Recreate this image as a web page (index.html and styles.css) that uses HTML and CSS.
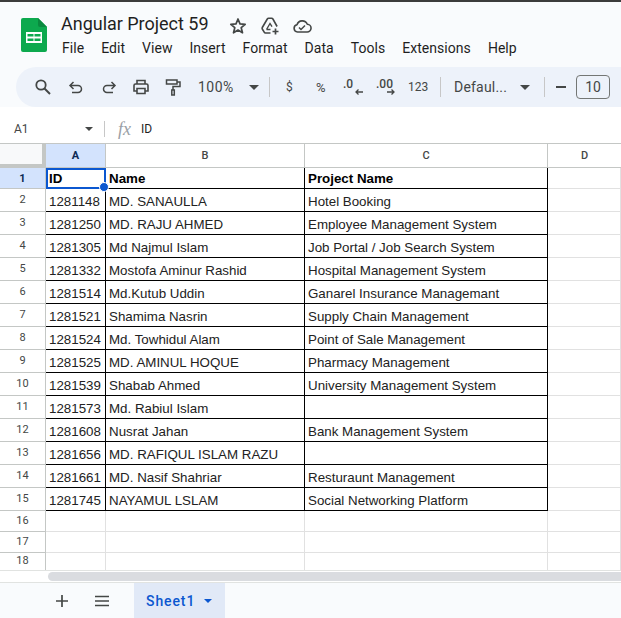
FILE: index.html
```html
<!DOCTYPE html>
<html lang="en">
<head>
<meta charset="utf-8">
<title>Angular Project 59</title>
<link rel="stylesheet" href="styles.css">
</head>
<body>
<div class="app">
  <header class="header">
    <svg class="logo" viewBox="0 0 26 34" width="26" height="34">
      <path d="M2 0h15l9 9v23a2 2 0 0 1-2 2H2a2 2 0 0 1-2-2V2a2 2 0 0 1 2-2z" fill="#0da94e"/>
      <path d="M17 0l9 9h-7a2 2 0 0 1-2-2z" fill="#0a8a3f"/>
      <path d="M5 14h16v11H5z" fill="#fff"/>
      <path d="M6.500 16h6v2.500h-6zM13.500 16h6v2.500h-6zM6.500 20.500h6V23h-6zM13.500 20.500h6V23h-6z" fill="#0da94e"/>
    </svg>
    <div class="titles">
      <div class="title-row">
        <span class="doc-title">Angular Project 59</span>
        <svg class="ti ti-star" viewBox="0 0 20 20" width="20" height="20"><path d="M10 3l2 4.900 5.200.4-4 3.400 1.300 5.100L10 14l-4.500 2.800 1.300-5.100-4-3.400 5.200-.4z" fill="none" stroke="#444746" stroke-width="1.700" stroke-linejoin="round"/></svg>
        <svg class="ti ti-drive" viewBox="0 0 20 20" width="20" height="20"><path d="M10.500 17H5.500a1.500 1.500 0 0 1-1.300-.8L2.300 13a1.500 1.500 0 0 1 0-1.500l5-8.500a1.500 1.500 0 0 1 1.300-.7h3a1.500 1.500 0 0 1 1.300.7l4.200 7.500" fill="none" stroke="#444746" stroke-width="1.600" stroke-linejoin="round"/><path d="M6.500 13.500L10 7.500l2 3.200M6.500 13.500h4" fill="none" stroke="#444746" stroke-width="1.400"/><path d="M15.500 12.500v6M12.500 15.500h6" stroke="#444746" stroke-width="1.700"/></svg>
        <svg class="ti ti-cloud" viewBox="0 0 20 20" width="20" height="20"><path d="M5.500 16a3.700 3.700 0 0 1-.5-7.300A5.500 5.500 0 0 1 15.300 8.200 3.900 3.900 0 0 1 15 16z" fill="none" stroke="#444746" stroke-width="1.600" stroke-linejoin="round"/><path d="M7 11.500l2 2 4-4" fill="none" stroke="#444746" stroke-width="1.500"/></svg>
      </div>
      <nav class="menu">
        <span>File</span><span>Edit</span><span>View</span><span>Insert</span><span>Format</span><span>Data</span><span>Tools</span><span>Extensions</span><span>Help</span>
      </nav>
    </div>
  </header>

  <div class="toolbar">
    <svg class="tb tb-search" viewBox="0 0 18 18" width="18" height="18"><circle cx="7" cy="7" r="4.700" fill="none" stroke="#444746" stroke-width="1.800"/><path d="M10.500 10.500l5.500 5.500" stroke="#444746" stroke-width="2"/></svg>
    <svg class="tb tb-undo" viewBox="0 0 18 18" width="18" height="18"><path d="M6.500 4L3 7.500 6.500 11M3.500 7.500H11a3.500 3.500 0 0 1 0 7H5" fill="none" stroke="#444746" stroke-width="1.500"/></svg>
    <svg class="tb tb-redo" viewBox="0 0 18 18" width="18" height="18"><path d="M11.500 4L15 7.500 11.500 11M14.500 7.500H7a3.500 3.500 0 0 0 0 7h6" fill="none" stroke="#444746" stroke-width="1.500"/></svg>
    <svg class="tb tb-print" viewBox="0 0 18 18" width="18" height="18"><path d="M5 6V2.500h8V6M5 13H2V7.500A1.500 1.500 0 0 1 3.500 6h11A1.500 1.500 0 0 1 16 7.500V13h-3M5 10.500h8v5H5z" fill="none" stroke="#444746" stroke-width="1.600"/></svg>
    <svg class="tb tb-paint" viewBox="0 0 18 18" width="18" height="18"><path d="M2.500 2h10.500v4H2.500zM13 4h3v4.500H9V12" fill="none" stroke="#444746" stroke-width="1.500"/><path d="M7.800 12h2.500v5H7.800z" fill="none" stroke="#444746" stroke-width="1.500"/></svg>
    <span class="tb-text zoom-val">100%</span>
    <span class="caret tb-caret1"></span>
    <span class="sep sep1"></span>
    <span class="tb-small dollar">$</span>
    <span class="tb-small pct">%</span>
    <span class="dec dec-less">.0<svg viewBox="0 0 10 6" width="10" height="6"><path d="M9 3H2M4.500.5L2 3l2.500 2.500" fill="none" stroke="#444746" stroke-width="1.300"/></svg></span>
    <span class="dec dec-more">.00<svg viewBox="0 0 10 6" width="10" height="6"><path d="M1 3h7M5.500.5L8 3 5.500 5.500" fill="none" stroke="#444746" stroke-width="1.300"/></svg></span>
    <span class="tb-small num">123</span>
    <span class="sep sep2"></span>
    <span class="tb-text font-name">Defaul...</span>
    <span class="caret tb-caret2"></span>
    <span class="sep sep3"></span>
    <span class="minus"></span>
    <span class="size-box">10</span>
  </div>

  <div class="formula">
    <span class="cell-ref">A1</span>
    <span class="caret ref-caret"></span>
    <span class="sep fx-sep"></span>
    <span class="fx">fx</span>
    <span class="fx-value">ID</span>
  </div>

  <div class="sheet">
    <div class="corner"></div>
    <div class="ch ch-a">A</div>
    <div class="ch">B</div>
    <div class="ch">C</div>
    <div class="ch ch-d">D</div>

    <div class="rh rh-sel">1</div><div class="c b bold sel">ID<i class="handle"></i></div><div class="c b bold">Name</div><div class="c b bold">Project Name</div><div class="c"></div>
    <div class="rh">2</div><div class="c b">1281148</div><div class="c b">MD. SANAULLA</div><div class="c b">Hotel Booking</div><div class="c"></div>
    <div class="rh">3</div><div class="c b">1281250</div><div class="c b">MD. RAJU AHMED</div><div class="c b">Employee Management System</div><div class="c"></div>
    <div class="rh">4</div><div class="c b">1281305</div><div class="c b">Md Najmul Islam</div><div class="c b">Job Portal / Job Search System</div><div class="c"></div>
    <div class="rh">5</div><div class="c b">1281332</div><div class="c b">Mostofa Aminur Rashid</div><div class="c b">Hospital Management System</div><div class="c"></div>
    <div class="rh">6</div><div class="c b">1281514</div><div class="c b">Md.Kutub Uddin</div><div class="c b">Ganarel Insurance Managemant</div><div class="c"></div>
    <div class="rh">7</div><div class="c b">1281521</div><div class="c b">Shamima Nasrin</div><div class="c b">Supply Chain Management</div><div class="c"></div>
    <div class="rh">8</div><div class="c b">1281524</div><div class="c b">Md. Towhidul Alam</div><div class="c b">Point of Sale Management</div><div class="c"></div>
    <div class="rh">9</div><div class="c b">1281525</div><div class="c b">MD. AMINUL HOQUE</div><div class="c b">Pharmacy Management</div><div class="c"></div>
    <div class="rh">10</div><div class="c b">1281539</div><div class="c b">Shabab Ahmed</div><div class="c b">University Management System</div><div class="c"></div>
    <div class="rh">11</div><div class="c b">1281573</div><div class="c b">Md. Rabiul Islam</div><div class="c b"></div><div class="c"></div>
    <div class="rh">12</div><div class="c b">1281608</div><div class="c b">Nusrat Jahan</div><div class="c b">Bank Management System</div><div class="c"></div>
    <div class="rh">13</div><div class="c b">1281656</div><div class="c b">MD. RAFIQUL ISLAM RAZU</div><div class="c b"></div><div class="c"></div>
    <div class="rh">14</div><div class="c b">1281661</div><div class="c b">MD. Nasif Shahriar</div><div class="c b">Resturaunt Management</div><div class="c"></div>
    <div class="rh">15</div><div class="c b">1281745</div><div class="c b">NAYAMUL LSLAM</div><div class="c b">Social Networking Platform</div><div class="c"></div>
    <div class="rh">16</div><div class="c"></div><div class="c"></div><div class="c"></div><div class="c"></div>
    <div class="rh">17</div><div class="c"></div><div class="c"></div><div class="c"></div><div class="c"></div>
    <div class="rh">18</div><div class="c"></div><div class="c"></div><div class="c"></div><div class="c"></div>
  </div>

  <div class="hscroll"><div class="thumb"></div></div>

  <footer class="tabs">
    <svg class="tab-plus" viewBox="0 0 14 14" width="14" height="14"><path d="M7 1v12M1 7h12" stroke="#444746" stroke-width="1.700"/></svg>
    <svg class="tab-list" viewBox="0 0 16 12" width="16" height="12"><path d="M1 1.500h14M1 6h14M1 10.500h14" stroke="#444746" stroke-width="1.500"/></svg>
    <div class="tab"><span>Sheet1</span><span class="caret tab-caret"></span></div>
  </footer>
</div>
</body>
</html>
```
FILE: styles.css
```css
* { box-sizing: border-box; }
html, body { margin: 0; padding: 0; }
body { width: 621px; height: 618px; overflow: hidden; font-family: "Roboto", "Liberation Sans", sans-serif; color: #1f1f1f; background: #f9fbfd; }
.app { height: 618px; display: flex; flex-direction: column; border-top: 2px solid #3c3c3c; overflow: hidden; }

.header { height: 65px; flex: none; display: flex; padding: 16px 0 0 21px; }
.logo { flex: none; }
.titles { margin-left: 14px; margin-top: -9px; }
.title-row { display: flex; align-items: center; height: 28px; }
.doc-title { font-size: 18px; color: #1f1f1f; width: 167px; white-space: nowrap; letter-spacing: -.02px; }
.ti { flex: none; position: relative; top: 3px; }
.ti-drive { margin-left: 12px; }
.ti-cloud { margin-left: 12px; }
.menu { display: flex; margin-top: 2px; margin-left: 1px; font-size: 14px; color: #1f1f1f; line-height: 18px; letter-spacing: .04px; }
.menu span { margin-right: 17px; white-space: nowrap; }

.toolbar { height: 40px; flex: none; margin-left: 16px; background: #edf2fa; border-radius: 20px 0 0 20px; display: flex; align-items: center; padding-left: 18px; color: #444746; white-space: nowrap; }
.tb { flex: none; }
.tb-undo { margin-left: 15px; }
.tb-redo { margin-left: 15px; }
.tb-print { margin-left: 14px; }
.tb-paint { margin-left: 14px; }
.tb-text { font-size: 14px; color: #444746; }
.zoom-val { margin-left: 16px; width: 44px; letter-spacing: .5px; }
.caret { display: inline-block; width: 0; height: 0; border-left: 5px solid transparent; border-right: 5px solid transparent; border-top: 5px solid #444746; flex: none; }
.tb-caret1 { margin-left: 7px; }
.sep { display: block; width: 1px; height: 20px; background: #c7c7c7; flex: none; }
.sep1 { margin-left: 10px; }
.tb-small { font-size: 12px; color: #444746; }
.dollar { margin-left: 16px; width: 8px; }
.pct { margin-left: 22px; width: 12px; font-size: 13px; }
.dec { position: relative; font-size: 12px; font-weight: 500; color: #444746; display: block; line-height: 14px; margin-top: -6px; }
.dec svg { position: absolute; right: -7px; top: 12px; }
.dec-less { margin-left: 15px; width: 14px; }
.dec-more { margin-left: 19px; width: 20px; }
.dec-more svg { right: 0; }
.num { margin-left: 12px; width: 20px; }
.sep2 { margin-left: 12px; }
.font-name { margin-left: 13px; width: 62px; letter-spacing: .2px; }
.tb-caret2 { margin-left: 4px; }
.sep3 { margin-left: 14px; }
.minus { display: block; width: 10px; height: 2px; background: #444746; margin-left: 11px; flex: none; }
.size-box { flex: none; display: block; margin-left: 10px; width: 34px; height: 24px; border: 1px solid #747775; border-radius: 4px; text-align: center; font-size: 14px; line-height: 22px; color: #444746; }

.formula { height: 36px; flex: none; background: #fff; display: flex; align-items: center; padding: 8px 0 0 14px; font-size: 12px; }
.cell-ref { width: 71px; color: #444746; }
.ref-caret { border-left-width: 4px; border-right-width: 4px; border-top-width: 4px; }
.fx-sep { margin-left: 11px; height: 16px; }
.fx { margin-left: 13px; width: 23px; font-family: "Liberation Serif", serif; font-style: italic; font-size: 18px; color: #9aa0a6; }
.fx-value { color: #1f1f1f; }

.sheet { flex: none; height: 427px; background: #fff; border-top: 1px solid #c4c7c5; display: grid; grid-template-columns: 46px 60px 199px 243px 73px; grid-template-rows: 24px 21px repeat(14, 23px) repeat(2, 21px) 18px; font-family: "Liberation Sans", Arial, sans-serif; font-size: 13.33px; overflow: hidden; }
.corner { background: #f8f9fa; border-right: 4px solid #c4c7c5; border-bottom: 4px solid #c4c7c5; }
.ch { background: #fff; border-right: 1px solid #c4c7c5; border-bottom: 1px solid #c4c7c5; font-family: "Roboto", sans-serif; font-size: 11px; font-weight: 500; color: #444746; display: flex; align-items: center; justify-content: center; }
.ch-a { background: #d3e3fd; color: #0b2a55; font-weight: 700; }
.ch-d { border-right: 0; }
.rh { background: #fff; border-right: 1px solid #c4c7c5; border-bottom: 1px solid #c4c7c5; font-family: "Roboto", sans-serif; font-size: 11px; color: #444746; display: flex; align-items: center; justify-content: center; padding-bottom: 2px; }
.rh-sel { background: #d3e3fd; color: #0b2a55; font-weight: 700; padding-bottom: 0; }
.c { position: relative; border-right: 1px solid #e1e1e1; border-bottom: 1px solid #e1e1e1; padding: 4px 0 0 3px; line-height: 18px; white-space: nowrap; color: #222; }
.b { border-right-color: #000; border-bottom-color: #000; }
.bold { font-weight: 700; color: #000; padding-top: 2px; }
.sel { outline: 2px solid #0b57d0; outline-offset: -2px; }
.handle { position: absolute; right: -4px; bottom: -4px; width: 8px; height: 8px; border-radius: 50%; background: #0b57d0; border: 1px solid #fff; box-sizing: content-box; z-index: 2; }

.hscroll { flex: none; height: 13px; background: #fff; border-top: 1px solid #e1e3e1; border-bottom: 1px solid #e1e3e1; padding: 1px 0 0 48px; }
.thumb { height: 9px; background: #dadce0; border-radius: 5px 0 0 5px; }

.tabs { flex: 1; display: flex; align-items: center; background: #f9fbfd; padding-left: 55px; }
.tab-list { margin-left: 25px; }
.tab { height: 100%; width: 91px; margin-left: 24px; background: #e1e9f7; display: flex; align-items: center; padding-left: 12px; color: #0b57d0; font-size: 14px; font-weight: 500; letter-spacing: .9px; }
.tab-caret { margin-left: 9px; border-top-color: #0b57d0; border-left-width: 4px; border-right-width: 4px; border-top-width: 4px; }
```
